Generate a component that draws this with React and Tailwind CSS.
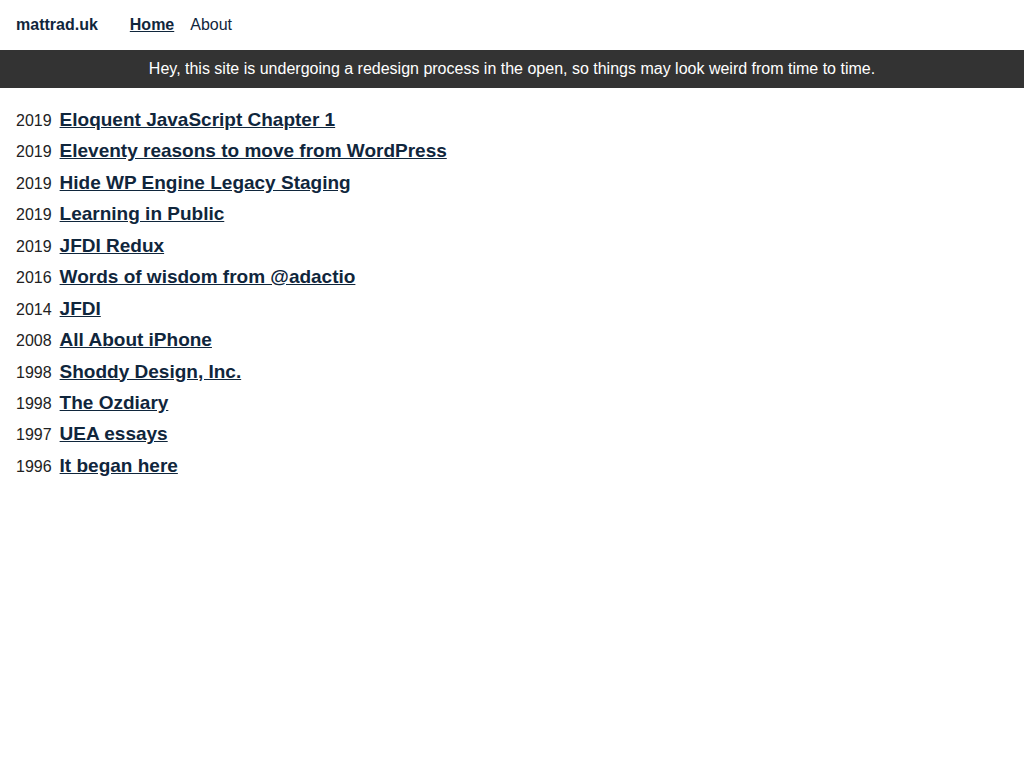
export default function App() {
    const posts = [
        ["2019", "Eloquent JavaScript Chapter 1"],
        ["2019", "Eleventy reasons to move from WordPress"],
        ["2019", "Hide WP Engine Legacy Staging"],
        ["2019", "Learning in Public"],
        ["2019", "JFDI Redux"],
        ["2016", "Words of wisdom from @adactio"],
        ["2014", "JFDI"],
        ["2008", "All About iPhone"],
        ["1998", "Shoddy Design, Inc."],
        ["1998", "The Ozdiary"],
        ["1997", "UEA essays"],
        ["1996", "It began here"],
    ]

    return (
        <div className="min-h-screen bg-white text-[#10263c] font-['Liberation_Sans',Arial,sans-serif]">
            <header className="h-[50px] flex items-center px-4">
                <a href="#" className="font-bold text-base text-[#10263c]">mattrad.uk</a>
                <nav className="flex gap-4 ml-8 text-base">
                    <a href="#" className="font-bold underline">Home</a>
                    <a href="#">About</a>
                </nav>
            </header>

            <div className="h-[38px] bg-[#333333] text-white text-base flex items-center justify-center">
                Hey, this site is undergoing a redesign process in the open, so things may look weird from time to time.
            </div>

            <ul className="px-4 pt-[16px]">
                {posts.map(([year, title], i) => (
                    <li key={i} className="flex items-baseline gap-2 h-[31.45px] leading-[31.45px]">
                        <span className="text-base text-[#222]">{year}</span>
                        <a href="#" className="text-[19px] font-bold underline text-[#10263c]">{title}</a>
                    </li>
                ))}
            </ul>
        </div>
    )
}
